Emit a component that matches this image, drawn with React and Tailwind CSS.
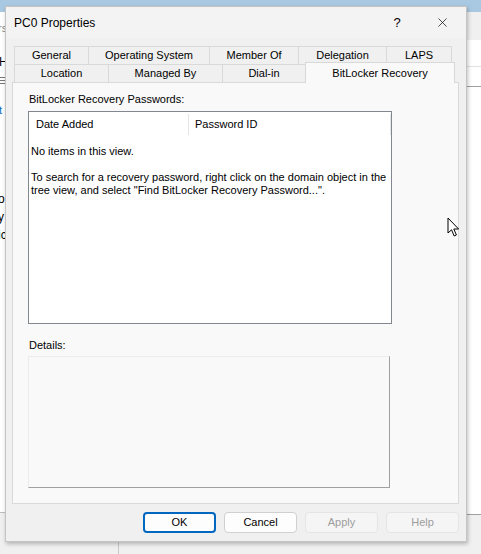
import React from 'react';
import { X } from 'lucide-react';

const row1 = [
  { label: 'General', w: 'w-[75px]' },
  { label: 'Operating System', w: 'w-[122px]' },
  { label: 'Member Of', w: 'w-[90px]' },
  { label: 'Delegation', w: 'w-[89px]' },
  { label: 'LAPS', w: 'w-[66px]' },
];

const row2 = [
  { label: 'Location', w: 'w-[95px]' },
  { label: 'Managed By', w: 'w-[115px]' },
  { label: 'Dial-in', w: 'w-[84px]' },
];

const Tab = ({ label, w }) => (
  <div className={`${w} h-[18px] flex items-center justify-center border-t border-l border-r border-[#d9d9d9] bg-[#f0f0f0] -mr-px text-[11px] text-black`}>
    {label}
  </div>
);

const Button = ({ children, variant }) => {
  const styles = {
    primary: 'bg-[#fdfdfd] border-2 border-[#0067c0] text-black',
    normal: 'bg-[#fdfdfd] border border-[#d0d0d0] text-black',
    disabled: 'bg-[#f5f5f5] border border-[#e5e5e5] text-[#9d9d9d]',
  };
  return (
    <div className={`w-[73px] h-[21px] rounded-[4px] flex items-center justify-center text-[11px] ${styles[variant]}`}>
      {children}
    </div>
  );
};

const Cursor = () => (
  <svg className="absolute left-[447px] top-[217px]" width="14" height="21" viewBox="0 0 14 21">
    <path d="M1 1 L1 16 L4.5 12.8 L7.2 19 L9.4 18 L6.8 12 L11.6 12 Z" fill="#fff" stroke="#000" strokeWidth="1" strokeLinejoin="round" />
  </svg>
);

export default function App() {
  return (
    <div className="relative w-[481px] h-[554px] overflow-hidden bg-[#f0f0f0] font-['Liberation_Sans',Arial,sans-serif]">
      {/* window behind the dialog */}
      <div className="absolute inset-x-0 top-0 h-[12px] bg-[#a9c9e2]" />
      <div className="absolute left-0 top-[12px] w-[8px] h-[500px] bg-white">
        <div className="text-[11px] text-[#8a8a8a] mt-[8px] -ml-[2px]">rs</div>
        <div className="text-[12px] text-black mt-[16px] -ml-[1px]">H</div>
        <div className="mt-[6px] flex flex-col gap-[2px]">
          <div className="h-px w-[6px] bg-[#777]" />
          <div className="h-px w-[6px] bg-[#777]" />
          <div className="h-px w-[6px] bg-[#777]" />
        </div>
        <div className="text-[11px] text-[#0067c0] mt-[18px] -ml-[1px]">t</div>
        <div className="text-[12px] text-black mt-[72px] -ml-[2px] leading-[18px]">
          <div>o</div>
          <div>y</div>
          <div>ic</div>
        </div>
      </div>
      <div className="absolute left-0 top-[512px] w-[8px] h-px bg-[#bdbdbd]" />
      <div className="absolute left-[118px] top-[540px] w-px h-[14px] bg-[#c9c9c9]" />
      <div className="absolute right-0 top-[40px] w-[16px] h-[474px] bg-white">
        <div className="mt-[26px] h-px bg-[#e3e3e3]" />
        <div className="mt-[19px] h-px bg-[#a0a0a0]" />
      </div>
      <div className="absolute right-0 top-[514px] w-[16px] h-px bg-[#a0a0a0]" />

      {/* dialog */}
      <div className="absolute left-[5px] top-[6px] w-[462px] h-[536px] bg-[#f0f0f0] border border-[#c4c4c4] shadow-[1px_2px_4px_rgba(0,0,0,0.25)] flex flex-col">
        <div className="h-[31px] flex items-center bg-[#f3f3f3] pl-[8px]">
          <div className="flex-1 text-[12px] text-black">PC0 Properties</div>
          <div className="w-[46px] text-center text-[13px] text-black">?</div>
          <div className="w-[46px] flex items-center justify-center pr-[2px]">
            <X size={15} strokeWidth={1.2} color="#111" />
          </div>
        </div>

        <div className="mt-[8px] ml-[8px] flex">
          {row1.map((t) => (
            <Tab key={t.label} {...t} />
          ))}
        </div>
        <div className="ml-[8px] flex items-end h-[18px]">
          {row2.map((t) => (
            <Tab key={t.label} {...t} />
          ))}
          <div className="relative z-10 w-[150px] h-[21px] -mb-px flex items-start justify-center pt-[2px] border-t border-l border-r border-[#d9d9d9] bg-[#f9f9f9] text-[11px] text-black">
            BitLocker Recovery
          </div>
        </div>

        <div className="ml-[6px] w-[447px] h-[422px] bg-[#f9f9f9] border border-[#d9d9d9] pl-[16px] pt-[10px]">
          <div className="text-[11px] text-black leading-[13px]">BitLocker Recovery Passwords:</div>
          <div className="mt-[5px] -ml-px w-[364px] h-[213px] bg-white border border-[#828790]">
            <div className="flex h-[25px] items-center text-[11px] text-black">
              <div className="w-[160px] h-[21px] pl-[7px] flex items-center border-r border-[#e5e5e5]">Date Added</div>
              <div className="flex-1 h-[21px] pl-[6px] flex items-center border-r border-[#e5e5e5]">Password ID</div>
            </div>
            <div className="pl-[2px] pt-[8px] text-[11px] text-black leading-[13px]">
              <div>No items in this view.</div>
              <div className="mt-[13px]">
                To search for a recovery password, right click on the domain object in the
                <br />
                tree view, and select "Find BitLocker Recovery Password...".
              </div>
            </div>
          </div>
          <div className="mt-[15px] text-[11px] text-black leading-[13px]">Details:</div>
          <div className="mt-[4px] -ml-px w-[362px] h-[132px] bg-[#f9f9f9] border-t border-l border-[#ececec] border-r border-b border-r-[#a0a0a0] border-b-[#a0a0a0]" />
        </div>

        <div className="flex-1 flex items-start justify-end gap-[8px] pr-[7px] pt-[8px]">
          <Button variant="primary">OK</Button>
          <Button variant="normal">Cancel</Button>
          <Button variant="disabled">Apply</Button>
          <Button variant="disabled">Help</Button>
        </div>
      </div>

      <Cursor />
    </div>
  );
}
